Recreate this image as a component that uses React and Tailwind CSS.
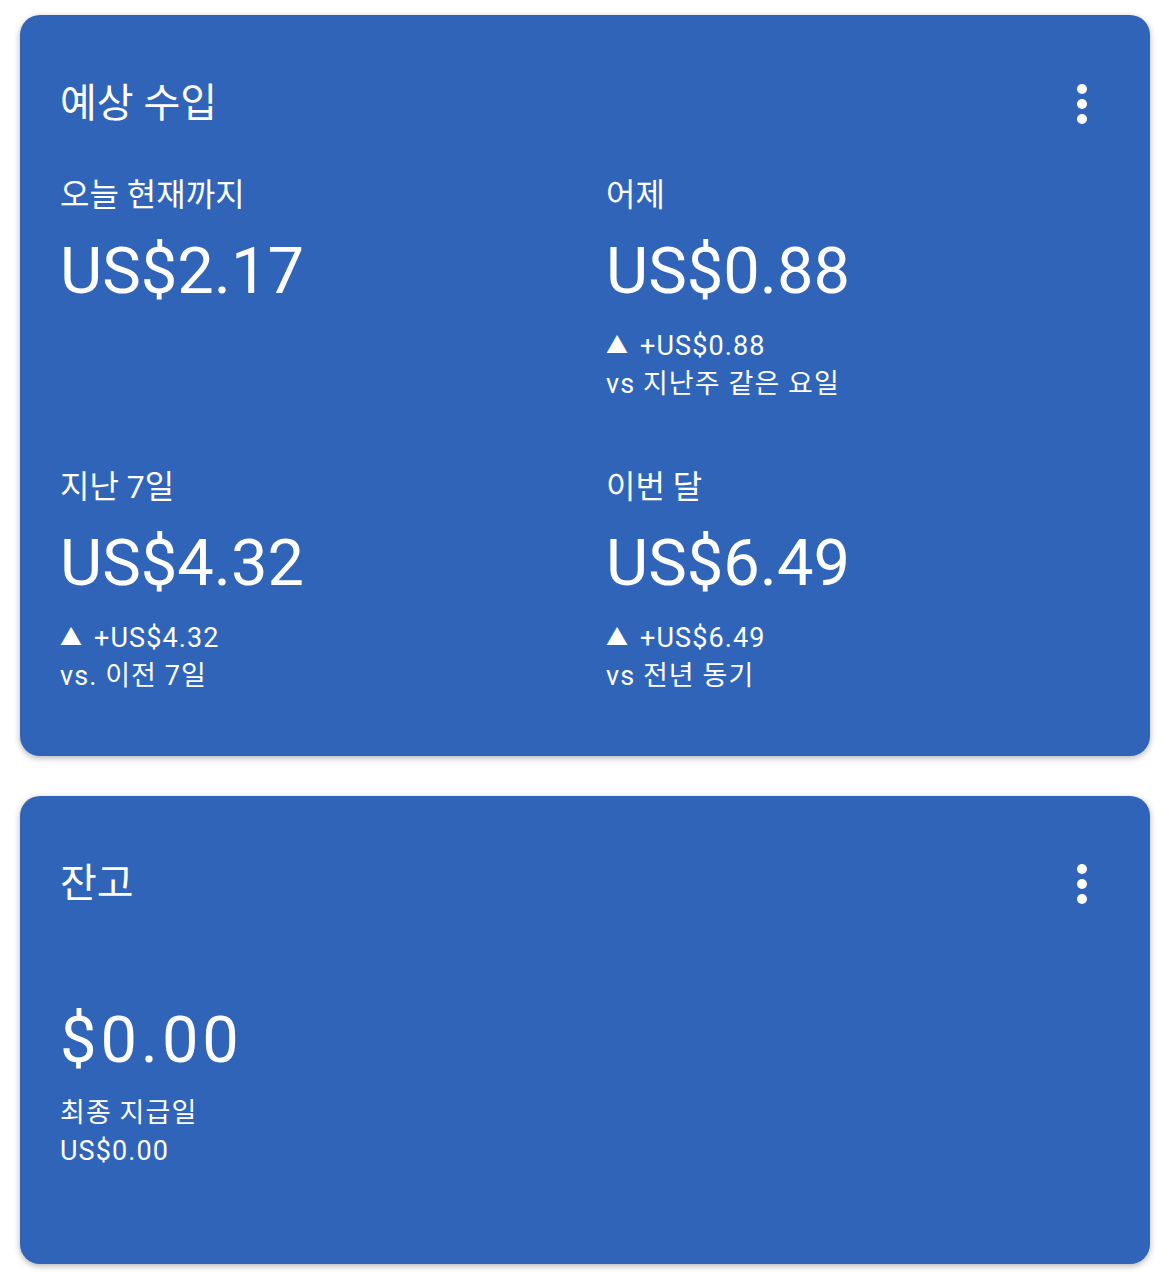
import React from "react";

const FONT = { fontFamily: 'Roboto, "Noto Sans CJK KR", sans-serif' };

const MoreVert = () => (
  <svg width="24" height="40" viewBox="0 0 24 40" className="fill-white">
    <circle cx="12" cy="5" r="5" />
    <circle cx="12" cy="20" r="5" />
    <circle cx="12" cy="35" r="5" />
  </svg>
);

const Delta = ({ value }) => (
  <div className="flex items-center">
    <span className="text-[22px] leading-none mr-[11px]">▲</span>
    <span>{value}</span>
  </div>
);

const Stat = ({ label, amount, delta, compare }) => (
  <div className="flex flex-col">
    <div className="text-[32px] leading-[36px]">{label}</div>
    <div className="mt-[26px] text-[65px] leading-[64px]">{amount}</div>
    {delta && (
      <div className="mt-[24px] text-[27px] leading-[38px] tracking-[0.04em]">
        <Delta value={delta} />
        <div>{compare}</div>
      </div>
    )}
  </div>
);

const Card = ({ title, children, className = "" }) => (
  <div className={`mx-[20px] rounded-[20px] bg-[#3064b9] text-white shadow-[0_2px_6px_rgba(0,0,0,0.3)] pl-[40px] pr-[56px] ${className}`}>
    <div className="flex items-center justify-between">
      <div className="text-[40px] leading-[42px]">{title}</div>
      <MoreVert />
    </div>
    {children}
  </div>
);

export default function App() {
  return (
    <div className="min-h-[1280px] bg-white pt-[15px]" style={FONT}>
      <Card title="예상 수입" className="pt-[68px] pb-[61px]">
        <div className="mt-[52px] grid grid-cols-[546px_1fr] gap-y-[66px]">
          <Stat label="오늘 현재까지" amount="US$2.17" />
          <Stat label="어제" amount="US$0.88" delta="+US$0.88" compare="vs 지난주 같은 요일" />
          <Stat label="지난 7일" amount="US$4.32" delta="+US$4.32" compare="vs. 이전 7일" />
          <Stat label="이번 달" amount="US$6.49" delta="+US$6.49" compare="vs 전년 동기" />
        </div>
      </Card>

      <Card title="잔고" className="mt-[40px] pt-[67px] pb-[94px]">
        <div className="mt-[103px] text-[65px] leading-[64px] tracking-[0.06em]">$0.00</div>
        <div className="mt-[22px] text-[27px] leading-[38px] tracking-[0.04em]">
          <div>최종 지급일</div>
          <div>US$0.00</div>
        </div>
      </Card>
    </div>
  );
}
